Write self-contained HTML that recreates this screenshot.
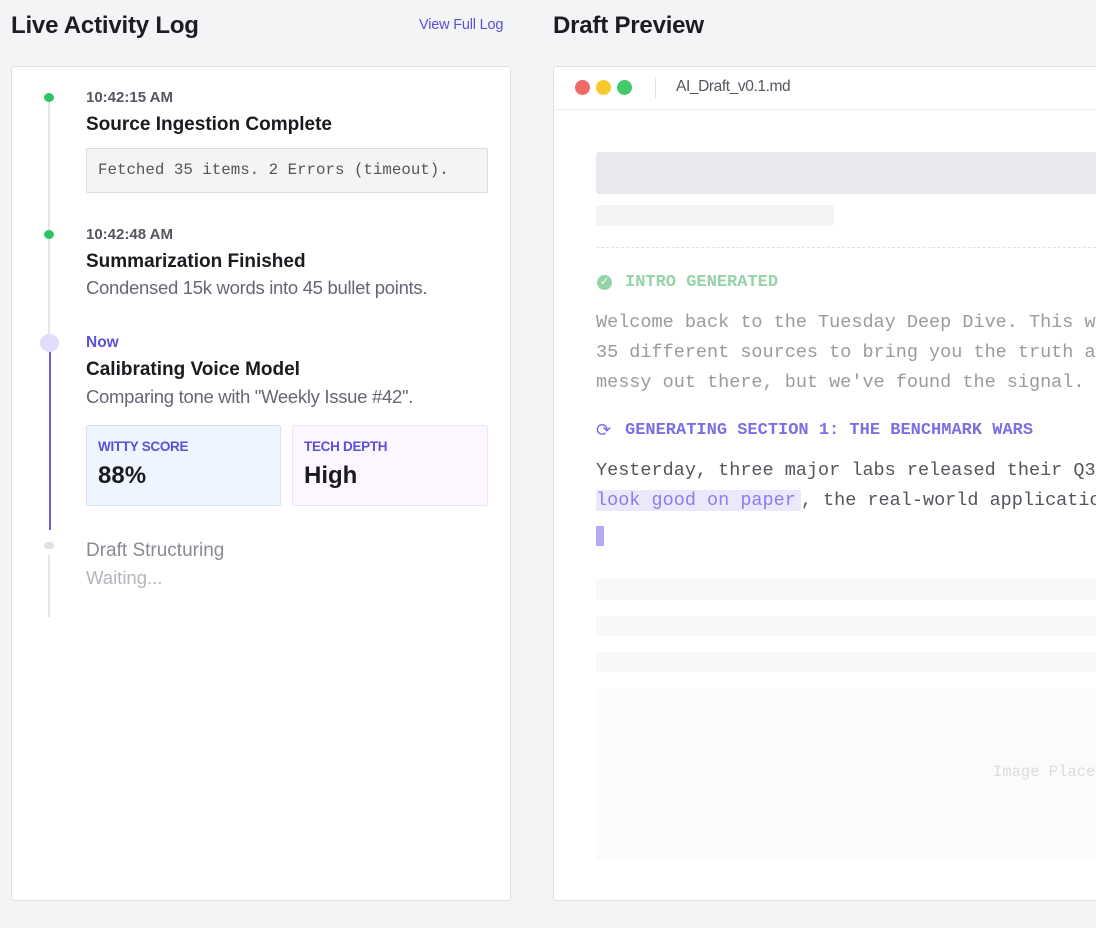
<!DOCTYPE html>
<html><head><style>
*{box-sizing:border-box;margin:0;padding:0}
html,body{overflow:hidden}
body{width:1096px;height:928px;background:#f3f4f6;font-family:"Liberation Sans",sans-serif;position:relative;color:#1a1a1f}
.a{position:absolute;white-space:nowrap}
.mono{font-family:"Liberation Mono",monospace}
</style></head><body>
<div class="a" style="left:11px;top:12px;font-size:24px;font-weight:bold;color:#1c1c22;letter-spacing:-0.2px">Live Activity Log</div>
<div class="a" style="left:419px;top:17px;font-size:14.5px;color:#5b50d6;letter-spacing:-0.2px">View Full Log</div>
<div class="a" style="left:553px;top:12px;font-size:24px;font-weight:bold;color:#1c1c22;letter-spacing:-0.2px">Draft Preview</div>

<div class="a" style="left:11px;top:66px;width:500px;height:835px;background:#fff;border:1px solid #dfe0e5;border-radius:4px"></div>
<div class="a" style="left:48px;top:100px;width:2px;height:130px;background:#e5e5ea"></div>
<div class="a" style="left:48px;top:238px;width:2px;height:100px;background:#e5e5ea"></div>
<div class="a" style="left:49px;top:350px;width:2px;height:180px;background:#6c5fe0"></div>
<div class="a" style="left:48px;top:555px;width:2px;height:62px;background:#e5e5ea"></div>
<div class="a" style="left:44px;top:93px;width:10px;height:9px;border-radius:50%;background:#2cc565"></div>
<div class="a" style="left:44px;top:230px;width:10px;height:9px;border-radius:50%;background:#2cc565"></div>
<div class="a" style="left:40px;top:334px;width:19px;height:18px;border-radius:50%;background:#e0dcfa"></div>
<div class="a" style="left:44px;top:542px;width:10px;height:7px;border-radius:4px;background:#e2e2e6"></div>

<div class="a" style="left:86px;top:89px;font-size:15px;font-weight:bold;color:#555560">10:42:15 AM</div>
<div class="a" style="left:86px;top:114px;font-size:19px;font-weight:bold">Source Ingestion Complete</div>
<div class="a mono" style="left:86px;top:148px;width:402px;height:45px;background:#f3f4f6;border:1px solid #dcdde2;border-radius:2px;padding:12px 0 0 11px;font-size:15.8px;color:#555">Fetched 35 items. 2 Errors (timeout).</div>
<div class="a" style="left:86px;top:226px;font-size:15px;font-weight:bold;color:#555560">10:42:48 AM</div>
<div class="a" style="left:86px;top:251px;font-size:19px;font-weight:bold">Summarization Finished</div>
<div class="a" style="left:86px;top:277px;font-size:18.5px;color:#676774;letter-spacing:-0.3px">Condensed 15k words into 45 bullet points.</div>
<div class="a" style="left:86px;top:334px;font-size:15.5px;font-weight:bold;color:#5b50d6">Now</div>
<div class="a" style="left:86px;top:359px;font-size:19px;font-weight:bold">Calibrating Voice Model</div>
<div class="a" style="left:86px;top:386px;font-size:18.5px;color:#676774;letter-spacing:-0.3px">Comparing tone with "Weekly Issue #42".</div>
<div class="a" style="left:86px;top:425px;width:195px;height:81px;background:#eef5ff;border:1px solid #d3e2f6;border-radius:2px"></div>
<div class="a" style="left:98px;top:439px;font-size:13.5px;font-weight:bold;color:#5b50d6;letter-spacing:-0.3px">WITTY SCORE</div>
<div class="a" style="left:98px;top:462px;font-size:24px;font-weight:bold">88%</div>
<div class="a" style="left:292px;top:425px;width:196px;height:81px;background:#fbf6ff;border:1px solid #ede5f7;border-radius:2px"></div>
<div class="a" style="left:304px;top:439px;font-size:13.5px;font-weight:bold;color:#5b50d6;letter-spacing:-0.3px">TECH DEPTH</div>
<div class="a" style="left:304px;top:462px;font-size:24px;font-weight:bold">High</div>
<div class="a" style="left:86px;top:540px;font-size:19px;color:#8a8a94">Draft Structuring</div>
<div class="a" style="left:86px;top:567px;font-size:18.5px;color:#b5b5bc">Waiting...</div>

<div class="a" style="left:553px;top:66px;width:543px;height:835px;background:#fff;border:1px solid #dfe0e5;border-right:none;border-radius:4px 0 0 4px"></div>
<div class="a" style="left:554px;top:109px;width:542px;height:1px;background:#ececf0"></div>
<div class="a" style="left:575px;top:80px;width:15px;height:15px;border-radius:50%;background:#f06a6a"></div>
<div class="a" style="left:596px;top:80px;width:15px;height:15px;border-radius:50%;background:#f8c92c"></div>
<div class="a" style="left:617px;top:80px;width:15px;height:15px;border-radius:50%;background:#41c96c"></div>
<div class="a" style="left:655px;top:77px;width:1px;height:21px;background:#e2e2e6"></div>
<div class="a" style="left:676px;top:78px;font-size:15.5px;color:#55555e;letter-spacing:-0.4px">AI_Draft_v0.1.md</div>

<div class="a" style="left:596px;top:152px;width:500px;height:42px;background:#e8e9ee;border-radius:3px 0 0 3px"></div>
<div class="a" style="left:596px;top:205px;width:238px;height:21px;background:#f3f4f6;border-radius:3px"></div>
<div class="a" style="left:596px;top:247px;width:500px;border-top:1px dashed #e2e2e6"></div>
<div class="a" style="left:597px;top:275px;width:15px;height:15px;border-radius:50%;background:#95d3a8;color:#fff;font-size:11px;text-align:center;line-height:15px">✓</div>
<div class="a mono" style="left:625px;top:273px;font-size:17px;font-weight:bold;color:#95d3a8">INTRO GENERATED</div>
<div class="a mono" style="left:596px;top:308px;font-size:18.5px;line-height:30px;color:#9a9aa0">Welcome back to the Tuesday Deep Dive. This we<br>35 different sources to bring you the truth a<br>messy out there, but we've found the signal.</div>
<div class="a" style="left:596px;top:420px;font-size:18px;color:#7c6fe0">⟳</div>
<div class="a mono" style="left:625px;top:421px;font-size:17px;font-weight:bold;color:#7c6fe0">GENERATING SECTION 1: THE BENCHMARK WARS</div>
<div class="a mono" style="left:596px;top:456px;font-size:18.5px;line-height:30px;color:#55555c">Yesterday, three major labs released their Q3<br><span style="background:#ece8fb;color:#8b7fe6;padding-right:5px">look good on paper</span>, the real-world applicatio</div>
<div class="a" style="left:596px;top:526px;width:8px;height:20px;background:#b6a8f2"></div>
<div class="a" style="left:596px;top:579px;width:500px;height:21px;background:#f8f8fa"></div>
<div class="a" style="left:596px;top:616px;width:500px;height:20px;background:#f8f8fa"></div>
<div class="a" style="left:596px;top:652px;width:500px;height:20px;background:#f8f8fa"></div>
<div class="a" style="left:596px;top:689px;width:500px;height:170px;background:#fbfbfc"></div>
<div class="a mono" style="left:993px;top:763px;font-size:15.5px;color:#dcdce0">Image Place</div>
</body></html>
